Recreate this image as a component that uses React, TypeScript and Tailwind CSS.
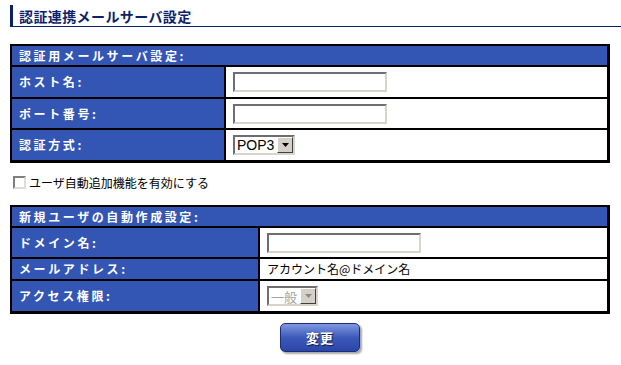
import React from 'react';

const jp = { fontFamily: '"Noto Sans CJK JP", "Noto Sans", sans-serif' };

function TextBox({ width = 154 }: { width?: number }) {
    return (
        <div
            className="h-[20px] bg-white border-2 border-t-[#6e6e6e] border-l-[#6e6e6e] border-b-[#d8d4cc] border-r-[#d8d4cc]"
            style={{ width }}
        />
    );
}

function DropArrow({ disabled }: { disabled?: boolean }) {
    return (
        <div className="w-[16px] h-[16px] bg-[#d4d0c8] border border-t-white border-l-white border-b-[#404040] border-r-[#404040] flex items-center justify-center">
            <svg width="7" height="4" viewBox="0 0 7 4">
                <path d="M0 0h7L3.5 4z" fill={disabled ? '#8a8a8a' : '#000'} />
            </svg>
        </div>
    );
}

function Select({ value, width, disabled }: { value: string; width: number; disabled?: boolean }) {
    return (
        <div
            className="h-[20px] bg-white border-2 border-t-[#6e6e6e] border-l-[#6e6e6e] border-b-[#d8d4cc] border-r-[#d8d4cc] flex items-center justify-between"
            style={{ width }}
        >
            <span
                className={`pl-[2px] leading-none ${disabled ? 'text-[#a0a0a0] text-[13px]' : 'text-black text-[14px]'}`}
                style={disabled ? jp : { fontFamily: '"Liberation Sans", Arial, sans-serif' }}
            >
                {value}
            </span>
            <DropArrow disabled={disabled} />
        </div>
    );
}

function Row({ label, labelW, h, last, children }: { label: string; labelW: number; h: number; last?: boolean; children: React.ReactNode }) {
    return (
        <div className={`flex ${last ? '' : 'border-b-2 border-black'}`} style={{ height: h + (last ? 0 : 2) }}>
            <div
                className="bg-[#3355b3] border-r-2 border-black flex items-center pl-[7px] text-white font-bold text-[12px] tracking-[2.6px]"
                style={{ ...jp, width: labelW }}
            >
                {label}
            </div>
            <div className="flex-1 bg-white flex items-center pl-[7px]">{children}</div>
        </div>
    );
}

function Panel({ title, children }: { title: string; children: React.ReactNode }) {
    return (
        <div className="w-[600px] border-t-2 border-l-2 border-r-[3px] border-b-[3px] border-black">
            <div
                className="h-[21px] bg-[#3355b3] border-b-2 border-black flex items-center pl-[7px] text-white font-bold text-[12px] tracking-[2.6px]"
                style={jp}
            >
                {title}
            </div>
            {children}
        </div>
    );
}

export default function App() {
    return (
        <div className="w-[621px] h-[365px] bg-white overflow-hidden pl-[10px] pt-[5px]" style={jp}>
            {/* page title */}
            <div className="flex items-center border-b border-[#0c1f6b] h-[22px]">
                <div className="w-[3px] h-[21px] bg-[#0c1f6b]" />
                <h1 className="ml-[6px] text-[14px] font-bold text-[#0c1f6b] tracking-[0.4px] leading-none">
                    認証連携メールサーバ設定
                </h1>
            </div>

            <div className="mt-[17px]">
                <Panel title="認証用メールサーバ設定:">
                    <Row label="ホスト名:" labelW={214} h={30}>
                        <TextBox />
                    </Row>
                    <Row label="ポート番号:" labelW={214} h={29}>
                        <TextBox />
                    </Row>
                    <Row label="認証方式:" labelW={214} h={30} last>
                        <Select value="POP3" width={62} />
                    </Row>
                </Panel>
            </div>

            <label className="flex items-center mt-[13px] ml-[3px] h-[13px]">
                <span className="w-[13px] h-[13px] bg-white border-2 border-t-[#808080] border-l-[#808080] border-b-[#e0ddd6] border-r-[#e0ddd6]" />
                <span className="ml-[3px] text-[12px] text-black leading-none">ユーザ自動追加機能を有効にする</span>
            </label>

            <div className="mt-[16px]">
                <Panel title="新規ユーザの自動作成設定:">
                    <Row label="ドメイン名:" labelW={248} h={29}>
                        <TextBox />
                    </Row>
                    <Row label="メールアドレス:" labelW={248} h={20}>
                        <span className="text-[12px] text-black">アカウント名@ドメイン名</span>
                    </Row>
                    <Row label="アクセス権限:" labelW={248} h={30} last>
                        <Select value="一般" width={51} disabled />
                    </Row>
                </Panel>
            </div>

            <div className="flex justify-center w-[620px] mt-[9px]">
                <button
                    className="w-[80px] h-[29px] rounded-[5px] border border-[#1b2b7e] bg-gradient-to-b from-[#7f98e0] via-[#3d5ab9] to-[#2a46a6] shadow-[2px_2px_2px_rgba(0,0,0,0.35)] text-white font-bold text-[13px] tracking-[1px] [text-shadow:1px_1px_1px_#0a1550]"
                    style={jp}
                >
                    変更
                </button>
            </div>
        </div>
    );
}
